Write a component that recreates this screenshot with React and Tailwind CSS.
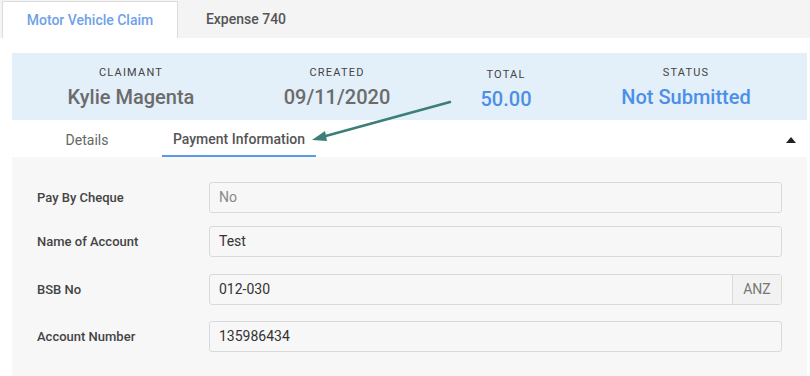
import React from 'react';

const rows = [
  { label: 'Pay By Cheque', value: 'No', muted: true, mt: 'mt-0' },
  { label: 'Name of Account', value: 'Test', mt: 'mt-[13px]' },
  { label: 'BSB No', value: '012-030', addon: 'ANZ', mt: 'mt-[17px]' },
  { label: 'Account Number', value: '135986434', mt: 'mt-[16px]' },
];

function Stat({ label, value, blue, w, low }) {
  return (
    <div className={`${w} flex flex-col items-center ${low ? 'pt-[15px]' : 'pt-[13px]'}`}>
      <span className="text-[11px] tracking-[1.2px] text-[#444] leading-[14px]">{label}</span>
      <span className={`text-[20px] font-medium leading-[24px] mt-[5px] ${blue ? 'text-[#4c8fe8]' : 'text-[#6b6b6b]'}`}>{value}</span>
    </div>
  );
}

export default function App() {
  return (
    <div className="relative w-[810px] h-[376px] bg-white overflow-hidden font-['Roboto','Liberation_Sans',sans-serif]">
      {/* top tabs */}
      <div className="h-[38px] bg-[#f4f4f4] flex items-end pl-[2px]">
        <div className="w-[176px] h-[37px] bg-white border border-b-0 border-[#dcdcdc] flex items-center justify-center text-[14px] font-medium text-[#6fa1ea]">
          Motor Vehicle Claim
        </div>
        <div className="w-[136px] h-[37px] flex items-center justify-center text-[14px] font-medium text-[#555]">
          Expense 740
        </div>
      </div>

      <div className="px-[12px] pr-[3px] pt-[15px]">
        {/* summary */}
        <div className="h-[67px] bg-[#e3eff9] flex">
          <Stat w="w-[238px]" label="CLAIMANT" value="Kylie Magenta" />
          <Stat w="w-[174px]" label="CREATED" value="09/11/2020" />
          <Stat w="w-[164px]" label="TOTAL" value="50.00" blue low />
          <Stat w="w-[196px]" label="STATUS" value="Not Submitted" blue />
        </div>

        {/* sub tabs */}
        <div className="h-[37px] flex items-stretch">
          <div className="w-[150px] flex items-center justify-center text-[14px] text-[#666] pt-[4px]">Details</div>
          <div className="w-[154px] flex items-center justify-center text-[14px] font-medium text-[#555] border-b-2 border-[#5b9be6] pt-[4px]">
            Payment Information
          </div>
          <div className="flex-1 flex items-center justify-end pr-[11px] pt-[3px]">
            <svg width="10" height="6" viewBox="0 0 10 6"><path d="M0 6 L5 0 L10 6 Z" fill="#222" /></svg>
          </div>
        </div>

        {/* form */}
        <div className="bg-[#f7f7f7] h-[219px] pt-[25px] pl-[25px] pr-[25px] flex flex-col">
          {rows.map((r) => (
            <div key={r.label} className={`flex items-center h-[31px] ${r.mt}`}>
              <div className="w-[172px] text-[13px] font-medium text-[#444]">{r.label}</div>
              <div className="flex-1 h-[31px] flex border border-[#dadada] rounded-[3px] bg-[#f7f7f7]">
                <div className={`flex-1 flex items-center px-[9px] text-[14px] ${r.muted ? 'text-[#888]' : 'text-[#333]'}`}>{r.value}</div>
                {r.addon && (
                  <div className="w-[49px] border-l border-[#dadada] bg-[#f2f2f2] flex items-center justify-center text-[14px] text-[#777]">{r.addon}</div>
                )}
              </div>
            </div>
          ))}
        </div>
      </div>

      {/* annotation arrow */}
      <svg className="absolute left-0 top-0 pointer-events-none" width="810" height="376">
        <line x1="450" y1="102" x2="322" y2="137" stroke="#3b7f78" strokeWidth="2.5" strokeLinecap="round" />
        <path d="M312 140 L325 131 L327 141 Z" fill="#3b7f78" />
      </svg>
    </div>
  );
}
